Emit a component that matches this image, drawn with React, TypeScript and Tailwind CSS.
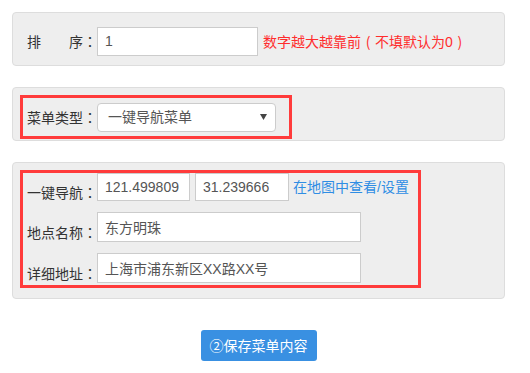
const font = "font-['Liberation_Sans','Noto_Sans_CJK_SC',sans-serif]";
const punct = "font-['Noto_Sans_CJK_TC',sans-serif]";

const Label = ({ text, className = "" }: { text: string; className?: string }) => (
  <label className={`w-[70px] whitespace-pre ${className}`}>
    {text}
    <span className={punct}>：</span>
  </label>
);

const App = () => {
  return (
    <main className={`w-[530px] h-[373px] bg-white pt-[12px] pl-[12px] text-[14px] leading-[20px] text-[#333] ${font}`}>
      <div className="w-[493px] flex flex-col gap-[21px]">
        {/* sort order */}
        <section className="h-[54px] bg-[#eeeeee] border border-[#dddddd] rounded-[4px] pl-[14px] pt-[14px]">
          <div className="flex items-center h-[28px]">
            <Label text="排　　序" />
            <input
              defaultValue="1"
              className="w-[161px] h-[29px] bg-white border border-[#cccccc] px-[7px] text-[#555] outline-none"
            />
            <span className="ml-[5px] text-[#ff2d2d] whitespace-pre">
              数字越大越靠前<span className={`${punct} inline-block w-[14px] text-center`}>(</span>
              不填默认为0<span className={`${punct} inline-block w-[14px] text-center`}>)</span>
            </span>
          </div>
        </section>

        {/* menu type */}
        <section className="h-[54px] bg-[#eeeeee] border border-[#dddddd] rounded-[4px] pl-[7px] pt-[7px]">
          <div className="w-[272px] h-[44px] border-[3px] border-[#ff3b3b] flex items-center pl-[4px]">
            <Label text="菜单类型" />
            <div className="w-[179px] h-[29px] bg-white border border-[#cccccc] rounded-[4px] flex items-center justify-between pl-[10px] pr-[8px] text-[#555]">
              <span>一键导航菜单</span>
              <svg width="7" height="6" viewBox="0 0 7 6">
                <path d="M0 0 L7 0 L3.5 6 Z" fill="#444" />
              </svg>
            </div>
          </div>
        </section>

        {/* one-click navigation */}
        <section className="h-[137px] bg-[#eeeeee] border border-[#dddddd] rounded-[4px] pl-[7px] pt-[7px]">
          <div className="w-[401px] h-[118px] border-[3px] border-[#ff3b3b] pl-[4px] flex flex-col gap-[11px]">
            <div className="flex items-center h-[28px]">
              <Label text="一键导航" className="mt-[10px]" />
              <input
                defaultValue="121.499809"
                className="w-[93px] h-[28px] bg-white border border-[#cccccc] px-[7px] text-[#555] outline-none"
              />
              <input
                defaultValue="31.239666"
                className="ml-[5px] w-[94px] h-[28px] bg-white border border-[#cccccc] px-[7px] text-[#555] outline-none"
              />
              <a className="ml-[4px] text-[#2f8de4]">在地图中查看/设置</a>
            </div>
            <div className="flex items-center h-[30px]">
              <Label text="地点名称" className="mt-[10px]" />
              <input
                defaultValue="东方明珠"
                className="w-[264px] h-[30px] bg-white border border-[#cccccc] px-[7px] text-[#555] outline-none"
              />
            </div>
            <div className="flex items-center h-[30px]">
              <Label text="详细地址" className="mt-[10px]" />
              <input
                defaultValue="上海市浦东新区XX路XX号"
                className="w-[264px] h-[30px] bg-white border border-[#cccccc] px-[7px] text-[#555] outline-none"
              />
            </div>
          </div>
        </section>
      </div>

      <div className="w-[493px] flex justify-center mt-[31px]">
        <button className="w-[116px] h-[31px] bg-[#3990e2] text-white rounded-[3px] text-[14px]">
          ②保存菜单内容
        </button>
      </div>
    </main>
  );
};

export default App;
